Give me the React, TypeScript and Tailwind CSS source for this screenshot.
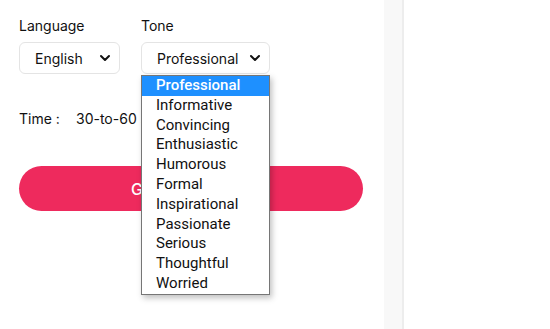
import { ChevronDown } from "lucide-react";

const tones = [
  "Professional",
  "Informative",
  "Convincing",
  "Enthusiastic",
  "Humorous",
  "Formal",
  "Inspirational",
  "Passionate",
  "Serious",
  "Thoughtful",
  "Worried",
];

function Select({ value, width }: { value: string; width: string }) {
  return (
    <div
      className={`flex h-[32px] ${width} items-center justify-between rounded-[6px] border border-[#e4e4e4] bg-white pl-[15px] pr-[6px] text-[14px] text-[#111]`}
    >
      <span>{value}</span>
      <ChevronDown className="h-4 w-4 text-[#111]" strokeWidth={3} />
    </div>
  );
}

export default function App() {
  return (
    <div className="flex h-[329px] w-[550px] bg-white font-['Inter',sans-serif] text-[#111]">
      <div className="w-[384px] shrink-0 pl-[19px] pt-[16px]">
        <div className="flex gap-[21px]">
          <div>
            <div className="mb-[6px] text-[14px] leading-[20px]">Language</div>
            <Select value="English" width="w-[101px]" />
          </div>
          <div className="relative">
            <div className="mb-[6px] text-[14px] leading-[20px]">Tone</div>
            <Select value="Professional" width="w-[129px]" />
            <ul className="absolute left-0 top-[59px] z-10 w-[129px] border border-[#767676] bg-white font-['Roboto',sans-serif] text-[15px] leading-[19.8px] text-[#111] shadow-[2px_3px_6px_rgba(0,0,0,0.25)]">
              {tones.map((t, i) => (
                <li
                  key={t}
                  className={
                    i === 0
                      ? "bg-[#1e90ff] pl-[14px] font-medium text-white"
                      : "pl-[14px]"
                  }
                >
                  {t}
                </li>
              ))}
            </ul>
          </div>
        </div>

        <div className="mt-[35px] flex items-center text-[14px] leading-[20px]">
          <span className="w-[57px]">Time :</span>
          <span>30-to-60 seconds</span>
        </div>

        <button className="mt-[37px] flex h-[45px] w-[344px] items-center justify-center rounded-full bg-[#ee2a5d] text-[16px] font-medium text-white">
          Generate Script
        </button>
      </div>
      <div className="w-[20px] shrink-0 border-r-[2px] border-[#ededed] bg-[#f8f8f8]" />
      <div className="flex-1 bg-white" />
    </div>
  );
}
